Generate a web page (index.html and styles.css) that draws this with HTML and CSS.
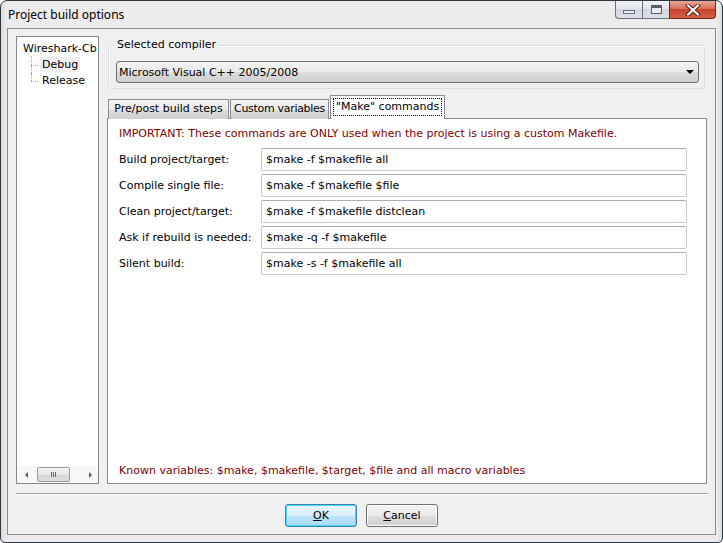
FILE: index.html
```html
<!DOCTYPE html>
<html>
<head>
<meta charset="utf-8">
<title>Project build options</title>
<link rel="stylesheet" href="styles.css">
</head>
<body>
<div class="window">
  <div class="titlebar">
    <span class="title">Project build options</span>
    <div class="caption-buttons">
      <div class="cbtn min"><span class="min-glyph"></span></div>
      <div class="cbtn max"><span class="max-glyph"></span></div>
      <div class="cbtn close">
        <svg width="16" height="12" viewBox="0 0 16 12">
          <path d="M3 1.5 L13 10.5 M13 1.5 L3 10.5" stroke="#5a1e14" stroke-width="4" stroke-linecap="square" fill="none"/>
          <path d="M3 1.5 L13 10.5 M13 1.5 L3 10.5" stroke="#ffffff" stroke-width="2" stroke-linecap="square" fill="none"/>
        </svg>
      </div>
    </div>
  </div>
  <div class="client">
    <div class="main">
      <div class="tree">
        <div class="tree-items">
          <div class="tree-root">Wireshark-Cb</div>
          <div class="tree-child first"><span class="sel">Debug</span></div>
          <div class="tree-child last"><span>Release</span></div>
        </div>
        <div class="hscroll">
          <div class="sarrow left"></div>
          <div class="thumb"><span class="grip"></span></div>
          <div class="strack"></div>
          <div class="sarrow right"></div>
        </div>
      </div>
      <div class="right">
        <fieldset class="group">
          <legend>Selected compiler</legend>
          <div class="combo">
            <span>Microsoft Visual C++ 2005/2008</span>
            <span class="combo-arrow"></span>
          </div>
        </fieldset>
        <div class="notebook">
          <div class="tabs">
            <div class="tab tab-pre">Pre/post build steps</div>
            <div class="tab tab-custom">Custom variables</div>
            <div class="tab active"><span class="focus">"Make" commands</span></div>
          </div>
          <div class="panel">
            <div class="important">IMPORTANT: These commands are ONLY used when the project is using a custom Makefile.</div>
            <div class="rows">
              <label>Build project/target:</label>
              <div class="input">$make -f $makefile all</div>
              <label>Compile single file:</label>
              <div class="input">$make -f $makefile $file</div>
              <label>Clean project/target:</label>
              <div class="input">$make -f $makefile distclean</div>
              <label>Ask if rebuild is needed:</label>
              <div class="input">$make -q -f $makefile</div>
              <label>Silent build:</label>
              <div class="input">$make -s -f $makefile all</div>
            </div>
            <div class="known">Known variables: $make, $makefile, $target, $file and all macro variables</div>
          </div>
        </div>
      </div>
    </div>
    <div class="separator"></div>
    <div class="buttons">
      <div class="btn default"><u>O</u>K</div>
      <div class="btn"><u>C</u>ancel</div>
    </div>
  </div>
</div>
</body>
</html>
```

FILE: styles.css
```css
* { box-sizing: border-box; }
html, body { margin: 0; padding: 0; background: #ffffff; }
body { width: 723px; height: 543px; overflow: hidden; }

.window {
  width: 723px;
  height: 543px;
  border: 1px solid #2c3540;
  border-radius: 7px 7px 5px 5px;
  background: linear-gradient(90deg, #dcdcdc 0px, #ececec 6px, #ececec 716px, #dcdcdc 721px);
  display: flex;
  flex-direction: column;
  padding: 0 6px 7px 6px;
  overflow: hidden;
  font-family: "DejaVu Sans", Verdana, sans-serif;
  font-size: 11px;
  color: #000;
}

.titlebar {
  height: 27px;
  display: flex;
  align-items: flex-start;
  flex: none;
}
.title {
  font-family: "Noto Sans", "Open Sans", sans-serif;
  font-size: 12px;
  line-height: 16px;
  padding: 6px 0 0 1px;
  color: #000;
}
.caption-buttons {
  margin-left: auto;
  display: flex;
  height: 18px;
}
.cbtn {
  height: 18px;
  border: 1px solid #6b717a;
  border-top: none;
  display: flex;
  align-items: center;
  justify-content: center;
}
.cbtn.min {
  width: 27px;
  border-right: none;
  border-bottom-left-radius: 4px;
  background: linear-gradient(#f1f3f6, #e2e5ea 45%, #d2d7de 50%, #dce1e7);
}
.cbtn.max {
  width: 27px;
  border-right: none;
  background: linear-gradient(#f1f3f6, #e2e5ea 45%, #d2d7de 50%, #dce1e7);
}
.cbtn.close {
  width: 47px;
  border-color: #6e2a1e;
  border-bottom-right-radius: 4px;
  background: linear-gradient(#e6a596, #d8705a 45%, #c8442b 50%, #d5624a);
}
.min-glyph {
  width: 12px;
  height: 4px;
  margin-top: 5px;
  border: 1px solid #6a6f77;
  background: #e8ebef;
}
.max-glyph {
  width: 11px;
  height: 9px;
  border: 1px solid #5a5f67;
  border-top-width: 3px;
  background: #e8ebef;
  margin-top: -1px;
}

.client {
  flex: 1;
  border: 1px solid #868b92;
  background: #f0f0f0;
  display: flex;
  flex-direction: column;
  padding: 7px 8px 6px 8px;
}

.main {
  display: flex;
  gap: 8px;
  height: 448px;
}

.tree {
  width: 83px;
  border: 1px solid #828790;
  background: #ffffff;
  display: flex;
  flex-direction: column;
}
.tree-items {
  padding: 4px 0 0 6px;
  flex: 1;
}
.tree-items div {
  height: 16px;
  line-height: 16px;
  white-space: nowrap;
}
.tree-child {
  padding-left: 17px;
  position: relative;
}
.tree-child::before {
  content: "";
  position: absolute;
  left: 8px;
  top: 8px;
  width: 7px;
  border-top: 1px dotted #a0a0a0;
}
.tree-child::after {
  content: "";
  position: absolute;
  left: 8px;
  top: -1px;
  height: 9px;
  border-left: 1px dotted #a0a0a0;
}
.tree-child.first::after { top: -1px; height: 17px; }
.tree-child.last::after { top: 0px; height: 8px; }
.tree-child span { padding: 1px 2px; }
.tree-child .sel { background: #eeeeee; }

.hscroll {
  height: 17px;
  display: flex;
  align-items: center;
  background: #f7f7f7;
}
.sarrow {
  width: 17px;
  height: 17px;
  display: flex;
  align-items: center;
  justify-content: center;
}
.sarrow.left::before {
  content: "";
  border-right: 3px solid #5d5d5d;
  border-top: 3px solid transparent;
  border-bottom: 3px solid transparent;
  margin-left: 1px;
}
.sarrow.right::before {
  content: "";
  border-left: 3px solid #5d5d5d;
  border-top: 3px solid transparent;
  border-bottom: 3px solid transparent;
  margin-right: 1px;
}
.thumb {
  width: 33px;
  height: 15px;
  margin-left: 3px;
  border: 1px solid #9b9b9b;
  border-radius: 2px;
  background: linear-gradient(#f3f3f3, #e6e6e6 50%, #d6d6d6 51%, #dfdfdf);
  display: flex;
  align-items: center;
  justify-content: center;
}
.grip {
  width: 5px;
  height: 5px;
  border-left: 1px solid #666;
  border-right: 1px solid #666;
  position: relative;
}
.grip::after {
  content: "";
  position: absolute;
  left: 1px;
  top: 0;
  height: 5px;
  border-left: 1px solid #666;
}
.strack { flex: 1; }

.right {
  flex: 1;
  display: flex;
  flex-direction: column;
  margin-top: 1px;
}

.group {
  margin: 0 2px 0 1px;
  padding: 8px 5px 5px 7px;
  border: 1px solid #d5dfe5;
  border-radius: 3px;
  box-shadow: inset 1px 1px 0 #ffffff;
}
.group legend {
  padding: 0 1px;
  line-height: 16px;
  font-size: 11px;
}
.combo {
  height: 22px;
  border: 1px solid #707070;
  border-radius: 3px;
  background: linear-gradient(#f2f2f2, #ebebeb 50%, #dddddd 51%, #cfcfcf);
  display: flex;
  align-items: center;
  padding: 0 0 0 2px;
}
.combo-arrow {
  margin-left: auto;
  margin-right: 4px;
  border-top: 4px solid #000;
  border-left: 4px solid transparent;
  border-right: 4px solid transparent;
}

.notebook {
  flex: 1;
  display: flex;
  flex-direction: column;
  margin-top: 6px;
}
.tabs {
  display: flex;
  align-items: flex-end;
  padding-left: 1px;
  height: 24px;
  position: relative;
  z-index: 1;
  margin-bottom: -1px;
}
.tab {
  height: 20px;
  line-height: 18px;
  border: 1px solid #898c95;
  border-bottom: none;
  background: linear-gradient(#f2f2f2, #ebebeb 50%, #dddddd 51%, #cfcfcf);
  white-space: nowrap;
  text-align: center;
}
.tab-pre { width: 121px; }
.tab-custom { width: 99px; margin-left: 1px; letter-spacing: -0.3px; }
.tab.active {
  height: 24px;
  width: 115px;
  background: #ffffff;
  padding: 2px 2px 0 2px;
  margin-left: 1px;
  line-height: 16px;
}
.tab.active .focus {
  display: inline-block;
  border: 1px dotted #000;
  padding: 0 2px;
  line-height: 16px;
}

.panel {
  flex: 1;
  border: 1px solid #898c95;
  background: #ffffff;
  display: flex;
  flex-direction: column;
  padding: 7px 19px 4px 11px;
}
.important, .known {
  color: #800000;
  line-height: 16px;
}
.rows {
  margin-top: 6px;
  display: grid;
  grid-template-columns: 142px 1fr;
  row-gap: 3px;
  align-items: center;
}
.input {
  height: 23px;
  border: 1px solid #c5c9cf;
  border-top-color: #abadb3;
  border-radius: 2px;
  padding-left: 4px;
  line-height: 21px;
  background: #ffffff;
}
.known { margin-top: auto; }

.separator {
  margin-top: 9px;
  height: 2px;
  border-top: 1px solid #a0a0a0;
  border-bottom: 1px solid #ffffff;
  margin-right: -1px;
}
.buttons {
  display: flex;
  justify-content: center;
  gap: 9px;
  margin-top: 9px;
}
.btn {
  width: 72px;
  height: 23px;
  border: 1px solid #707070;
  border-radius: 3px;
  background: linear-gradient(#f2f2f2, #ebebeb 50%, #dddddd 51%, #cfcfcf);
  box-shadow: inset 0 0 0 1px #fcfcfc;
  display: flex;
  align-items: center;
  justify-content: center;
  font-size: 11px;
}
.btn.default {
  border-color: #3c7fb1;
  background: linear-gradient(#eaf6fd, #d9f0fc 50%, #bee6fd 51%, #a7d9f5);
  box-shadow: inset 0 0 0 1px #48d8fb;
}
.btn u { text-decoration: underline; }
```
